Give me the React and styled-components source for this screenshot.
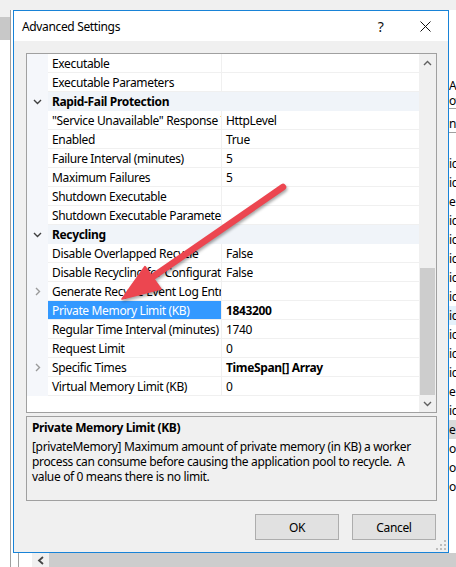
import React from "react";
import styled, { createGlobalStyle } from "styled-components";

const UI_FONT = `"Noto Sans", "Open Sans", "Liberation Sans", sans-serif`;

const GlobalStyle = createGlobalStyle`
  html, body {
    margin: 0;
    padding: 0;
    background: #f0f0f0;
  }
  body {
    font-family: ${UI_FONT};
    font-size: 12px;
    letter-spacing: -0.35px;
    color: #000;
  }
`;

const rows = [
  { name: "Executable", value: "" },
  { name: "Executable Parameters", value: "" },
  { name: "Rapid-Fail Protection", category: true },
  { name: "\"Service Unavailable\" Response Type", value: "HttpLevel" },
  { name: "Enabled", value: "True" },
  { name: "Failure Interval (minutes)", value: "5" },
  { name: "Maximum Failures", value: "5" },
  { name: "Shutdown Executable", value: "" },
  { name: "Shutdown Executable Parameters", value: "" },
  { name: "Recycling", category: true },
  { name: "Disable Overlapped Recycle", value: "False" },
  { name: "Disable Recycling for Configuration Changes", value: "False" },
  { name: "Generate Recycle Event Log Entry", value: "", expandable: true },
  { name: "Private Memory Limit (KB)", value: "1843200", bold: true, selected: true },
  { name: "Regular Time Interval (minutes)", value: "1740" },
  { name: "Request Limit", value: "0" },
  { name: "Specific Times", value: "TimeSpan[] Array", bold: true, expandable: true },
  { name: "Virtual Memory Limit (KB)", value: "0" },
];

const backItems = ["ic", "ic", "er", "ic", "ic", "ic", "ic", "ic", "ic", "ic", "ic", "ic", "e", "ic", "e", "or", "or", "or"];

const App = () => {
  return (
    <>
      <GlobalStyle />
      <Desktop>
        <BackWindow>
          <BackBody>
            <LeftRail>
              <RailCap />
              <RailBlock />
            </LeftRail>
            <Filler />
            <RightStrip>
              <StripLine>Ap</StripLine>
              <StripLine>ov</StripLine>
              <StripRule />
              <StripTab>ng</StripTab>
              <StripRule />
              <StripList>
                {backItems.map((t, i) => (
                  <StripItem key={i} $tone={i === 8 ? "blue" : i === 14 ? "gray" : "none"}>
                    {t}
                  </StripItem>
                ))}
              </StripList>
            </RightStrip>
          </BackBody>
          <HScroll>
            <HCell $w={10} $line />
            <HCell $w={7} $line />
            <HCell $w={13} />
            <HButton>
              <svg width="8" height="9" viewBox="0 0 8 9">
                <path d="M6 1 L2 4.5 L6 8" fill="none" stroke="#444" strokeWidth="1.8" />
              </svg>
            </HButton>
            <HThumb />
          </HScroll>
        </BackWindow>

        <Dialog>
          <TitleBar>
            <Title>Advanced Settings</Title>
            <CaptionButton>?</CaptionButton>
            <CaptionButton>
              <svg width="11" height="11" viewBox="0 0 11 11">
                <path d="M0.5 0.5 L10.5 10.5 M10.5 0.5 L0.5 10.5" stroke="#111" strokeWidth="1" />
              </svg>
            </CaptionButton>
          </TitleBar>

          <DialogBody>
            <PropertyGrid>
              <GridList>
                {rows.map((r, i) =>
                  r.category ? (
                    <Row key={i}>
                      <Margin>
                        <svg width="9" height="6" viewBox="0 0 9 6">
                          <path d="M1 1 L4.5 4.5 L8 1" fill="none" stroke="#404040" strokeWidth="1.4" />
                        </svg>
                      </Margin>
                      <CategoryCell>{r.name}</CategoryCell>
                    </Row>
                  ) : (
                    <Row key={i}>
                      <Margin>
                        {r.expandable && (
                          <svg width="6" height="9" viewBox="0 0 6 9">
                            <path d="M1 1 L4.5 4.5 L1 8" fill="none" stroke="#9a9a9a" strokeWidth="1.4" />
                          </svg>
                        )}
                      </Margin>
                      <NameCell $selected={r.selected}>{r.name}</NameCell>
                      <ValueCell $bold={r.bold}>{r.value}</ValueCell>
                    </Row>
                  )
                )}
              </GridList>
              <VScroll>
                <VButton>
                  <svg width="9" height="6" viewBox="0 0 9 6">
                    <path d="M1 5 L4.5 1.5 L8 5" fill="none" stroke="#606060" strokeWidth="1.4" />
                  </svg>
                </VButton>
                <VTrack>
                  <VThumb />
                </VTrack>
                <VButton>
                  <svg width="9" height="6" viewBox="0 0 9 6">
                    <path d="M1 1 L4.5 4.5 L8 1" fill="none" stroke="#606060" strokeWidth="1.4" />
                  </svg>
                </VButton>
              </VScroll>
            </PropertyGrid>

            <DescPanel>
              <DescTitle>Private Memory Limit (KB)</DescTitle>
              <DescText>
                {"[privateMemory] Maximum amount of private memory (in KB) a worker\nprocess can consume before causing the application pool to recycle.  A\nvalue of 0 means there is no limit."}
              </DescText>
            </DescPanel>

            <ButtonRow>
              <DialogButton>OK</DialogButton>
              <DialogButton>Cancel</DialogButton>
            </ButtonRow>
          </DialogBody>

          <Grip>
            <svg width="10" height="10" viewBox="0 0 10 10">
              {[
                [8, 0],
                [8, 4],
                [4, 4],
                [8, 8],
                [4, 8],
                [0, 8],
              ].map(([x, y], i) => (
                <rect key={i} x={x} y={y} width="2" height="2" fill="#bdbdbd" />
              ))}
            </svg>
          </Grip>
        </Dialog>

        <ArrowLayer viewBox="0 0 456 567" width="456" height="567">
          <line x1="283" y1="187" x2="154" y2="276" stroke="#ec4650" strokeWidth="6.5" strokeLinecap="round" />
          <polygon points="122,299 145,266.5 161,289" fill="#ec4650" stroke="#ec4650" strokeWidth="1.5" strokeLinejoin="round" />
        </ArrowLayer>
      </Desktop>
    </>
  );
};

export default App;

const Desktop = styled.div`
  position: relative;
  width: 456px;
  height: 567px;
  overflow: hidden;
  background: #f0f0f0;
`;

const BackWindow = styled.div`
  position: absolute;
  left: 0;
  right: 0;
  top: 10px;
  bottom: 0;
  display: flex;
  flex-direction: column;
  background: #fff;
`;

const BackBody = styled.div`
  flex: 1;
  display: flex;
  min-height: 0;
`;

const LeftRail = styled.div`
  width: 10px;
  border-right: 1px solid #a0a0a0;
  display: flex;
  flex-direction: column;
`;

const RailCap = styled.div`
  height: 7px;
  background: #f0f0f0;
`;

const RailBlock = styled.div`
  height: 23px;
  background: #c8c8c8;
`;

const Filler = styled.div`
  flex: 1;
`;

const RightStrip = styled.div`
  width: 7px;
  overflow: hidden;
  padding-top: 68px;
  display: flex;
  flex-direction: column;
  white-space: nowrap;
  font-size: 12px;
`;

const StripLine = styled.div`
  line-height: 15px;
  height: 15px;
`;

const StripRule = styled.div`
  height: 0;
  border-top: 1px solid #a0a0a0;
  &:first-of-type {
    margin-top: 19px;
  }
`;

const StripTab = styled.div`
  padding-top: 7px;
  line-height: 16px;
  height: 16px;
`;

const StripList = styled.div`
  margin-top: 21px;
  display: flex;
  flex-direction: column;
`;

const StripItem = styled.div`
  height: 19px;
  line-height: 19px;
  background: ${(p) => (p.$tone === "blue" ? "#e5f1fb" : p.$tone === "gray" ? "#d9d9d9" : "transparent")};
`;

const HScroll = styled.div`
  height: 14px;
  display: flex;
  background: #fff;
`;

const HCell = styled.div`
  width: ${(p) => p.$w}px;
  border-right: ${(p) => (p.$line ? "1px solid #a0a0a0" : "none")};
`;

const HButton = styled.div`
  width: 17px;
  background: #f0f0f0;
  display: flex;
  align-items: center;
  justify-content: center;
`;

const HThumb = styled.div`
  flex: 1;
  background: #cdcdcd;
`;

const Dialog = styled.div`
  position: absolute;
  left: 13px;
  top: 10px;
  width: 436px;
  height: 543px;
  box-sizing: border-box;
  border: 1px solid #1883d7;
  background: #f0f0f0;
  display: flex;
  flex-direction: column;
`;

const TitleBar = styled.div`
  height: 30px;
  background: #fff;
  display: flex;
  align-items: center;
`;

const Title = styled.div`
  flex: 1;
  padding-left: 8px;
  font-size: 12px;
  color: #000;
`;

const CaptionButton = styled.div`
  width: 45px;
  height: 30px;
  display: flex;
  align-items: center;
  justify-content: center;
  font-size: 14px;
  color: #111;
`;

const DialogBody = styled.div`
  flex: 1;
  padding: 12px 11px 12px 12px;
  display: flex;
  flex-direction: column;
`;

const PropertyGrid = styled.div`
  height: 360px;
  box-sizing: border-box;
  border: 1px solid #a0a0a0;
  background: #fff;
  display: flex;
`;

const GridList = styled.div`
  flex: 1;
  display: flex;
  flex-direction: column;
  min-width: 0;
`;

const Row = styled.div`
  display: grid;
  grid-template-columns: 21px 174px 1fr;
  height: 19px;
`;

const Margin = styled.div`
  background: #f5f7fb;
  display: flex;
  align-items: center;
  justify-content: center;
`;

const cellBase = `
  box-sizing: border-box;
  height: 19px;
  line-height: 19px;
  padding-left: 4px;
  border-bottom: 1px solid #f0f0f0;
  white-space: nowrap;
  overflow: hidden;
`;

const NameCell = styled.div`
  ${cellBase}
  border-right: 1px solid #f0f0f0;
  background: ${(p) => (p.$selected ? "#3399ff" : "#fff")};
  color: ${(p) => (p.$selected ? "#fff" : "#000")};
`;

const ValueCell = styled.div`
  ${cellBase}
  font-weight: ${(p) => (p.$bold ? 700 : 400)};
`;

const CategoryCell = styled.div`
  ${cellBase}
  grid-column: 2 / 4;
  background: #f0f4f9;
  border-bottom-color: #f0f4f9;
  font-weight: 700;
`;

const VScroll = styled.div`
  width: 17px;
  background: #f0f0f0;
  display: flex;
  flex-direction: column;
`;

const VButton = styled.div`
  height: 17px;
  display: flex;
  align-items: center;
  justify-content: center;
`;

const VTrack = styled.div`
  flex: 1;
  display: flex;
  flex-direction: column;
  justify-content: flex-end;
  padding: 0 1px;
`;

const VThumb = styled.div`
  height: 127px;
  background: #cdcdcd;
`;

const DescPanel = styled.div`
  margin-top: 3px;
  height: 85px;
  box-sizing: border-box;
  border: 1px solid #a0a0a0;
  padding: 3px 5px;
`;

const DescTitle = styled.div`
  font-weight: 700;
  line-height: 16px;
`;

const DescText = styled.div`
  margin-top: 3px;
  line-height: 15px;
  white-space: pre;
`;

const ButtonRow = styled.div`
  margin-top: 13px;
  padding-right: 1px;
  display: flex;
  justify-content: flex-end;
  gap: 13px;
`;

const DialogButton = styled.button`
  width: 84px;
  height: 26px;
  box-sizing: border-box;
  border: 1px solid #adadad;
  background: #e1e1e1;
  font-family: ${UI_FONT};
  font-size: 12px;
  letter-spacing: -0.35px;
  color: #000;
  padding: 0;
`;

const Grip = styled.div`
  position: absolute;
  right: 2px;
  bottom: 2px;
  width: 10px;
  height: 10px;
  line-height: 0;
`;

const ArrowLayer = styled.svg`
  position: absolute;
  left: 0;
  top: 0;
  pointer-events: none;
  filter: drop-shadow(1px 2px 1.5px rgba(0, 0, 0, 0.35));
`;
